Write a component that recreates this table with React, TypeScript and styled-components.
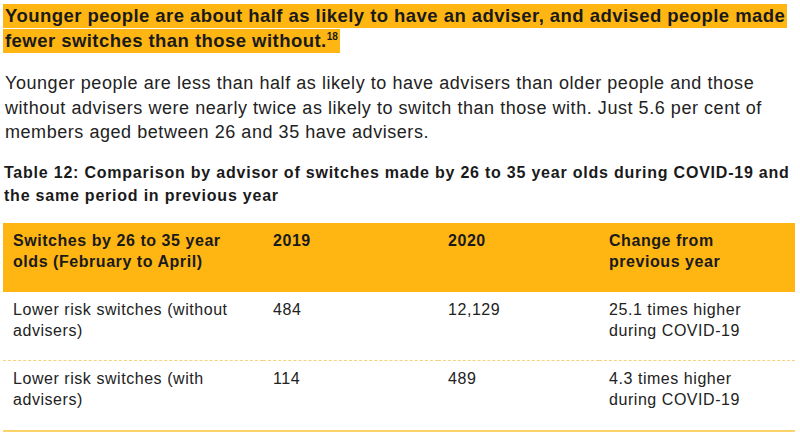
import styled, { createGlobalStyle } from "styled-components";

const GlobalStyle = createGlobalStyle`
  html, body {
    margin: 0;
    padding: 0;
    background: #ffffff;
  }
  body {
    font-family: "Liberation Sans", Arial, sans-serif;
    color: #1f1f1f;
  }
`;

interface IRow {
  label: string;
  y2019: string;
  y2020: string;
  change: string;
}

const rows: IRow[] = [
  {
    label: "Lower risk switches (without advisers)",
    y2019: "484",
    y2020: "12,129",
    change: "25.1 times higher during COVID-19",
  },
  {
    label: "Lower risk switches (with advisers)",
    y2019: "114",
    y2020: "489",
    change: "4.3 times higher during COVID-19",
  },
];

export default function App() {
  return (
    <>
      <GlobalStyle />
      <Page>
        <Heading>
          <Highlight>
            Younger people are about half as likely to have an adviser, and
            advised people made fewer switches than those without.<Sup>18</Sup>
          </Highlight>
        </Heading>
        <Body>
          Younger people are less than half as likely to have advisers than
          older people and those without advisers were nearly twice as likely
          to switch than those with. Just 5.6 per cent of members aged between
          26 and 35 have advisers.
        </Body>
        <Caption>
          Table 12: Comparison by advisor of switches made by 26 to 35 year
          olds during COVID-19 and the same period in previous year
        </Caption>
        <Table>
          <thead>
            <HeadRow>
              <Th>Switches by 26 to 35 year olds (February to April)</Th>
              <Th>2019</Th>
              <Th>2020</Th>
              <Th>Change from previous year</Th>
            </HeadRow>
          </thead>
          <tbody>
            {rows.map((row, i) => (
              <BodyRow key={row.label} isLast={i === rows.length - 1}>
                <Td>{row.label}</Td>
                <Td>{row.y2019}</Td>
                <Td>{row.y2020}</Td>
                <Td>{row.change}</Td>
              </BodyRow>
            ))}
          </tbody>
        </Table>
      </Page>
    </>
  );
}

const Page = styled.div`
  width: 800px;
  height: 437px;
  padding: 3px 5px 0 3px;
  box-sizing: border-box;
  overflow: hidden;
`;

const Heading = styled.h2`
  margin: 0;
  font-size: 18.5px;
  letter-spacing: 0.45px;
  font-weight: 700;
  line-height: 25px;
  color: #1a1a1a;
`;

const Highlight = styled.span`
  background: #ffb612;
  padding: 1px 2px 2px 2px;
  box-decoration-break: clone;
  -webkit-box-decoration-break: clone;
`;

const Sup = styled.sup`
  font-size: 10px;
  letter-spacing: 0;
  line-height: 0;
  vertical-align: 7px;
`;

const Body = styled.p`
  margin: 18px 0 0 2px;
  font-size: 18px;
  letter-spacing: 0.55px;
  line-height: 24.5px;
  color: #222222;
`;

const Caption = styled.p`
  margin: 16px 0 0 1px;
  font-size: 16px;
  letter-spacing: 0.78px;
  font-weight: 700;
  line-height: 23px;
  color: #1a1a1a;
`;

const Table = styled.table`
  width: 792px;
  margin-top: 16px;
  border-collapse: collapse;
  table-layout: fixed;
  font-size: 16px;
  letter-spacing: 0.55px;
  line-height: 21px;

  th:nth-child(1),
  td:nth-child(1) {
    width: 240px;
  }
  th:nth-child(2),
  td:nth-child(2) {
    width: 155px;
  }
  th:nth-child(3),
  td:nth-child(3) {
    width: 141px;
  }
  th:nth-child(4),
  td:nth-child(4) {
    padding-right: 40px;
  }
`;

const HeadRow = styled.tr`
  background: #ffb612;
  height: 69px;
`;

const Th = styled.th`
  text-align: left;
  vertical-align: top;
  font-weight: 700;
  color: #1a1a1a;
  padding: 7px 10px 0 10px;
`;

const BodyRow = styled.tr<{ isLast: boolean }>`
  height: ${(props) => (props.isLast ? "70px" : "69px")};
  border-bottom: ${(props) =>
    props.isLast ? "2px solid #fbd36a" : "1px dashed #f7d27a"};
`;

const Td = styled.td`
  vertical-align: top;
  color: #222222;
  padding: 7px 10px 0 10px;
`;
